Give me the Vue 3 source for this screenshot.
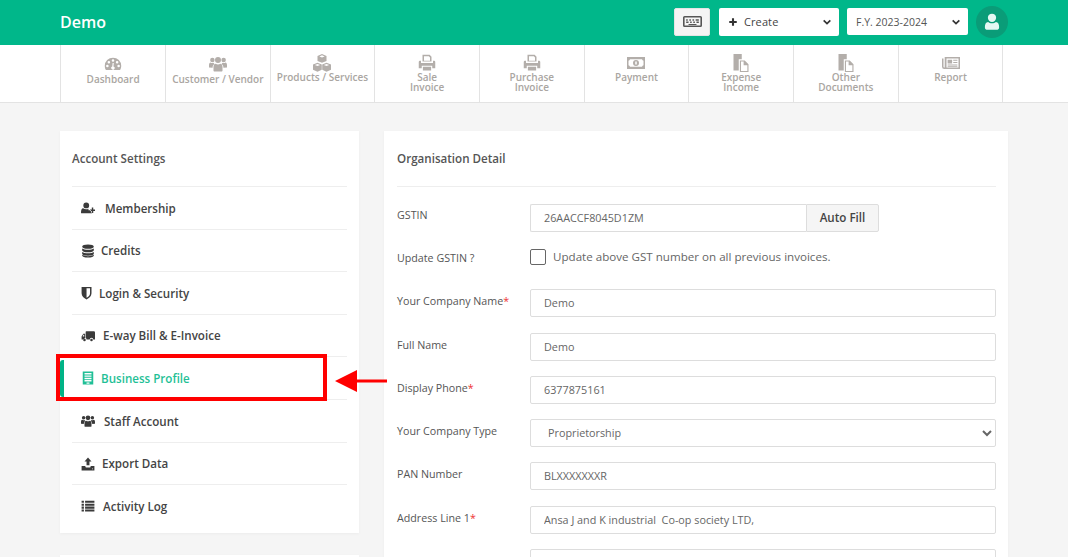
<template>
  <div class="page">
    <header class="topbar">
      <div class="brand">Demo</div>
      <div class="top_actions">
        <button class="key_btn">
          <svg viewBox="0 0 24 24"><path fill-rule="evenodd" :d="icons.keyboard" /></svg>
        </button>
        <div class="top_select create">
          <svg class="plus" viewBox="0 0 24 24"><path :d="icons.plus" /></svg>
          <span>Create</span>
          <svg class="chev" viewBox="0 0 12 12"><path d="M2 4l4 4 4-4" /></svg>
        </div>
        <div class="top_select year">
          <span>F.Y. 2023-2024</span>
          <svg class="chev" viewBox="0 0 12 12"><path d="M2 4l4 4 4-4" /></svg>
        </div>
        <div class="avatar">
          <svg viewBox="0 0 24 24"><path :d="icons.user" /></svg>
        </div>
      </div>
    </header>

    <nav class="menu">
      <a v-for="item in menu" :key="item.label" class="menu_item" :class="{ low: item.low }">
        <svg viewBox="0 0 24 24"><path fill-rule="evenodd" :d="icons[item.icon]" /></svg>
        <span v-html="item.label"></span>
      </a>
    </nav>

    <main class="content">
      <aside class="side">
        <section class="card side_card">
          <h3>Account Settings</h3>
          <ul>
            <li v-for="item in settings" :key="item.label" :class="{ active: item.active }">
              <svg viewBox="0 0 24 24" :style="{ marginRight: item.gap + 'px' }"><path fill-rule="evenodd" :d="icons[item.icon]" /></svg>
              <span>{{ item.label }}</span>
              <template v-if="item.active">
                <div class="red_box"></div>
                <svg class="red_arrow" viewBox="0 0 52 24"><path d="M0 12L22 1v9.500h30v3H22V23z" /></svg>
              </template>
            </li>
          </ul>
        </section>
        <section class="card side_next"></section>
      </aside>

      <section class="card detail">
        <h3>Organisation Detail</h3>
        <form @submit.prevent>
          <div class="row">
            <label>GSTIN</label>
            <div class="group">
              <input type="text" value="26AACCF8045D1ZM">
              <button type="button">Auto Fill</button>
            </div>
          </div>
          <div class="row check_row">
            <label>Update GSTIN ?</label>
            <div class="check">
              <input type="checkbox">
              <span>Update above GST number on all previous invoices.</span>
            </div>
          </div>
          <div class="row" v-for="field in fields" :key="field.label">
            <label>{{ field.label }}<b v-if="field.req">*</b></label>
            <select v-if="field.select">
              <option>{{ field.value }}</option>
            </select>
            <input v-else type="text" :value="field.value">
          </div>
        </form>
      </section>
    </main>
  </div>
</template>

<script setup>
const icons = {
  keyboard: 'M2 5h20a2 2 0 0 1 2 2v10a2 2 0 0 1-2 2H2a2 2 0 0 1-2-2V7a2 2 0 0 1 2-2zM2 7v10h20V7zM4 9h2v2H4zM8 9h2v2H8zM12 9h2v2h-2zM16 9h4v2h-4zM4 12h3v2H4zM9 12h2v2H9zM13 12h2v2h-2zM17 12h3v2h-3zM7 15h10v1.500H7z',
  plus: 'M9.500 3h5v6.500H21v5h-6.500V21h-5v-6.500H3v-5h6.500z',
  user: 'M12 1.500a5.500 5.500 0 1 1 0 11 5.500 5.500 0 0 1 0-11zM6 23c-2 0-3.500-1.200-3.500-3.500 0-4 1.200-7 4.300-7 1.300 1.100 3 1.800 5.200 1.800s3.900-.7 5.200-1.800c3.100 0 4.300 3 4.300 7C21.500 21.800 20 23 18 23z',
  gauge: 'M12 3.500A11 11 0 0 0 1 14.500c0 2 .5 3.900 1.500 5.500h19a11 11 0 0 0 1.500-5.500A11 11 0 0 0 12 3.500zM12 5.500a1.700 1.700 0 1 1 0 3.400 1.700 1.700 0 0 1 0-3.400zM6.500 8a1.700 1.700 0 1 1 0 3.400 1.700 1.700 0 0 1 0-3.400zM17.500 8a1.700 1.700 0 1 1 0 3.400 1.700 1.700 0 0 1 0-3.400zM4.500 13a1.700 1.700 0 1 1 0 3.400 1.700 1.700 0 0 1 0-3.400zM19.500 13a1.700 1.700 0 1 1 0 3.400 1.700 1.700 0 0 1 0-3.400zM13 10.500l-.4 4.700a2.200 2.200 0 1 1-1.600.1l.5-4.800z',
  users: 'M12 2.500a4 4 0 1 1 0 8 4 4 0 0 1 0-8zM4.500 3.500a3 3 0 1 1 0 6 3 3 0 0 1 0-6zM19.500 3.500a3 3 0 1 1 0 6 3 3 0 0 1 0-6zM7.500 22c-1 0-1.500-.6-1.500-1.500V16c0-3 1.500-4.500 3-4.500.8.700 1.800 1 3 1s2.200-.3 3-1c1.500 0 3 1.500 3 4.500v4.500c0 .9-.5 1.500-1.500 1.500zM0 16.500v-3c0-2 1-3.500 2-3.500.7.500 1.500.8 2.500.8.600 0 1.100-.1 1.700-.4.300.8.600 1.200 1.100 1.500C5.500 13 4.800 14.500 4.800 17zM24 16.500v-3c0-2-1-3.500-2-3.500-.7.500-1.500.8-2.500.8-.6 0-1.100-.1-1.700-.4-.3.800-.6 1.200-1.100 1.500 1.800 1.100 2.500 2.600 2.500 5.100z',
  cubes: 'M12 0l6 2.500v6.700l-6 2.500-6-2.500V2.500zM12 1.800L8.500 3.200 12 4.600l3.500-1.400zM6 11.500l5.700 2.400v7l-5.700 2.600-6-2.600v-7zM6 13.200l-3.500 1.500L6 16.100l3.500-1.400zM18 11.500l6 2.400v7l-6 2.600-5.700-2.600v-7zM18 13.200l-3.500 1.500 3.500 1.400 3.500-1.400z',
  print: 'M6 1h9.500L18 3.500V10H6zM8 3v6h8V4.500L14.500 3zM1 10.500a1.500 1.500 0 0 1 1.500-1.500H4v3h16V9h1.500a1.500 1.500 0 0 1 1.500 1.500V19h-4v-3.500H5V19H1zM6.500 17h11v5h-11z',
  money: 'M0 4h24v16H0zM4 7a3 3 0 0 1-2 2v6a3 3 0 0 1 2 2h16a3 3 0 0 1 2-2V9a3 3 0 0 1-2-2zM12 8a4 4 0 1 1 0 8 4 4 0 0 1 0-8zM11 10v4h2v-4z',
  files: 'M2 0h11v7H9v15H2zM10.500 8.500H17l5 5V24H10.500zM12 10v12.500h8.500V15h-5v-5z',
  news: 'M3 4h21v16H3a3 3 0 0 1-3-3V6h2v11a1 1 0 0 0 1 1h.6V4zM6 6v12h16V6zM7.500 7.500h6v5h-6zM15 7.500h5.500V9H15zM15 10.500h5.500V12H15zM7.500 14h13v1.200h-13zM7.500 16h13v1h-13z',
  userPlus: 'M9 2.500a5 5 0 1 1 0 10 5 5 0 0 1 0-10zM1 21c-.6 0-1-.4-1-1 0-4 1-7.500 3.800-7.500 1.300 1.100 3 1.800 5.200 1.800 1.500 0 2.800-.3 3.800-.9v2.600h4.200v3.700h2V21zM18.500 11h2.500v3.500h3V17h-3v3.500h-2.500V17h-3v-2.500h3z',
  database: 'M12 1c6 0 10 1.600 10 3.500S18 8 12 8 2 6.400 2 4.500 6 1 12 1zM2 7.500C4 9 8 9.800 12 9.800s8-.8 10-2.300v3C22 12.400 18 14 12 14S2 12.400 2 10.500zM2 13.500c2 1.500 6 2.300 10 2.300s8-.8 10-2.300v3c0 1.900-4 3.500-10 3.500S2 18.400 2 16.500zM2 18.500c2 1.500 6 2.300 10 2.300s8-.8 10-2.300v1C22 21.400 18 23 12 23S2 21.400 2 19.500z',
  shield: 'M1 1.500h17v11c0 5-4 8.500-8.500 10.500C5 21 1 17.500 1 12.500zM9.500 4v16.300c3.300-1.700 6-4.500 6-7.800V4z',
  truck: 'M9 4h13a2 2 0 0 1 2 2v12h-3a3 3 0 0 0-6 0H9.500A3 3 0 0 0 8 15.500V5a1 1 0 0 1 1-1zM7 8v8a3 3 0 0 0-2.500 2H1v-5l3-5zM5.500 10H4.200L2.800 13h2.700zM6 16.500a2.200 2.200 0 1 1 0 4.400 2.200 2.200 0 0 1 0-4.400zM18 16.500a2.200 2.200 0 1 1 0 4.400 2.200 2.200 0 0 1 0-4.400z',
  building: 'M3 1h18v22H3zM6 3.500v2.500h12V3.500zM6 7.500V10h12V7.500zM6 11.500V14h12v-2.500zM6 15.500V18h12v-2.500zM9.500 19.500V22h5v-2.500z',
  upload: 'M12 1l6 6.500h-3.500V14h-5V7.500H6zM1 15.500h6.500v1c0 .8.700 1.500 1.500 1.500h6c.8 0 1.500-.7 1.500-1.500v-1H23V23H1zM19 19.500v1.500h1.500v-1.500z',
  list: 'M1 3h4v3.500H1zM7 3h16v3.500H7zM1 8h4v3.500H1zM7 8h16v3.500H7zM1 13h4v3.500H1zM7 13h16v3.500H7zM1 18h4v3.500H1zM7 18h16v3.500H7z',
}

const menu = [
  { label: 'Dashboard', icon: 'gauge', low: true },
  { label: 'Customer / Vendor', icon: 'users', low: true },
  { label: 'Products / Services', icon: 'cubes' },
  { label: 'Sale<br>Invoice', icon: 'print' },
  { label: 'Purchase<br>Invoice', icon: 'print' },
  { label: 'Payment', icon: 'money' },
  { label: 'Expense<br>Income', icon: 'files' },
  { label: 'Other<br>Documents', icon: 'files' },
  { label: 'Report', icon: 'news' },
]

const settings = [
  { label: 'Membership', icon: 'userPlus', gap: 10 },
  { label: 'Credits', icon: 'database', gap: 6 },
  { label: 'Login & Security', icon: 'shield', gap: 4 },
  { label: 'E-way Bill & E-Invoice', icon: 'truck', gap: 8 },
  { label: 'Business Profile', icon: 'building', gap: 6, active: true },
  { label: 'Staff Account', icon: 'users', gap: 9 },
  { label: 'Export Data', icon: 'upload', gap: 7 },
  { label: 'Activity Log', icon: 'list', gap: 8 },
]

const fields = [
  { label: 'Your Company Name', value: 'Demo', req: true },
  { label: 'Full Name', value: 'Demo' },
  { label: 'Display Phone', value: '6377875161', req: true },
  { label: 'Your Company Type', value: 'Proprietorship', select: true },
  { label: 'PAN Number', value: 'BLXXXXXXXR' },
  { label: 'Address Line 1', value: 'Ansa J and K industrial  Co-op society LTD,', req: true },
  { label: 'Address Line 2', value: '' },
]
</script>

<style>
html, body {
  overflow: hidden;
}
</style>

<style scoped>
* {
  box-sizing: border-box;
  font-family: 'Open Sans', sans-serif;
}
.page {
  height: 100vh;
  overflow: hidden;
  background: #f5f5f5;
}

/* TOP BAR */
.topbar {
  height: 45px;
  padding: 0 60px 2px;
  background: #00b78a;
  display: flex;
  justify-content: space-between;
  align-items: center;
}
.brand {
  color: #fff;
  font-size: 16px;
  font-weight: 600;
}
.top_actions {
  display: flex;
  align-items: center;
}
.key_btn {
  width: 36px;
  height: 28px;
  margin-right: 8px;
  padding: 0;
  border: 1px solid #e4e4e4;
  border-radius: 2px;
  background: #f4f4f4;
  display: flex;
  justify-content: center;
  align-items: center;
}
.key_btn svg {
  width: 19px;
  height: 19px;
  fill: #555;
}
.top_select {
  width: 121px;
  height: 28px;
  margin-right: 8px;
  padding: 0 7px 0 9px;
  border-radius: 2px;
  background: #fff;
  color: #555;
  font-size: 10.5px;
  display: flex;
  align-items: center;
}
.top_select.create {
  width: 120px;
  margin-left: 1px;
  color: #444;
  font-size: 11px;
  letter-spacing: .1px;
}
.top_select.year {
  height: 27px;
}
.plus {
  width: 10px;
  height: 10px;
  margin-right: 6px;
  fill: #333;
}
.chev {
  width: 10px;
  height: 10px;
  margin-left: auto;
  fill: none;
  stroke: #333;
  stroke-width: 2;
}
.avatar {
  width: 32px;
  height: 32px;
  border-radius: 50%;
  background: #0a9c78;
  display: flex;
  justify-content: center;
  align-items: center;
}
.avatar svg {
  width: 18px;
  height: 19px;
  fill: #e4f8f3;
}

/* MENU */
.menu {
  height: 58px;
  padding: 0 64.7px 0 60.3px;
  background: #fff;
  border-bottom: 1px solid #e3e3e3;
  display: flex;
}
.menu_item {
  flex: 1;
  padding-top: 9px;
  border-left: 1px solid #e3e3e3;
  color: #aaa6a2;
  font-size: 10px;
  font-weight: 600;
  line-height: 10px;
  text-align: center;
  display: flex;
  flex-direction: column;
  align-items: center;
}
.menu_item:last-child {
  border-right: 1px solid #e3e3e3;
}
.menu_item svg {
  width: 18px;
  height: 18px;
  margin-bottom: 0;
  fill: #b3aeaa;
}
.menu_item.low {
  padding-top: 10px;
}
.menu_item.low svg {
  margin-bottom: 1px;
}

/* CONTENT */
.content {
  padding: 28px 60px 0;
  display: flex;
  align-items: flex-start;
  gap: 25px;
}
.card {
  background: #fff;
  box-shadow: 0 1px 3px rgba(0, 0, 0, .04);
}
.card h3 {
  height: 55px;
  margin: 0;
  color: #555;
  font-size: 11.6px;
  font-weight: 600;
  line-height: 55px;
}
.side {
  width: 299px;
  flex: none;
}
.side_card {
  padding: 0 12px 6px;
}
.side_card ul {
  margin: 0;
  padding: 0;
  list-style: none;
}
.side_card li {
  position: relative;
  height: 42.6px;
  padding: .5px 0 0 9px;
  border-top: 1px solid #eee;
  color: #444;
  font-size: 11.6px;
  font-weight: 600;
  display: flex;
  align-items: center;
}
.side_card li svg {
  width: 14px;
  height: 14px;
  flex: none;
  fill: #3a3a3a;
}
.side_card li.active {
  z-index: 1;
  color: #1fbf96;
}
.side_card li.active::before {
  content: '';
  position: absolute;
  left: -12px;
  top: 3px;
  bottom: 2px;
  width: 4px;
  background: #00b386;
  border-radius: 3px 0 0 3px;
}
.side_card li.active svg {
  fill: #1fbf96;
}
.red_box {
  position: absolute;
  left: -16px;
  top: -3px;
  width: 271px;
  height: 47px;
  border: 4px solid #f00;
}
.side_card li.active .red_arrow {
  position: absolute;
  left: 263px;
  top: 12px;
  width: 52px;
  height: 24px;
  fill: #f00;
}
.side_next {
  height: 60px;
  margin-top: 22px;
}
.detail {
  width: 624px;
  flex: none;
  padding: 0 12px 0 13px;
}
.detail h3 {
  border-bottom: 1px solid #eee;
  height: 56px;
}
form {
  padding-top: 17px;
}
.row {
  height: 43.3px;
  display: flex;
  align-items: flex-start;
}
.row label {
  width: 133px;
  flex: none;
  padding-top: 5px;
  color: #555;
  font-size: 10.7px;
}
.row:first-child label {
  padding-top: 4px;
}
.row label b {
  color: #e33;
  font-weight: 400;
}
.row input[type='text'], .row select {
  width: 466px;
  height: 28px;
  padding: 0 13px 1px;
  border: 1px solid #ddd;
  border-radius: 2px;
  outline: none;
  background: #fff;
  color: #666;
  font-size: 10.8px;
}
.group {
  display: flex;
}
.group input[type='text'] {
  width: 276px;
  padding-bottom: 2px;
  border-radius: 2px 0 0 2px;
  border-right: none;
}
.group button {
  width: 73px;
  height: 28px;
  padding-bottom: 2px;
  border: 1px solid #ddd;
  border-radius: 0 2px 2px 0;
  background: #f5f5f5;
  color: #444;
  font-size: 11.6px;
  font-weight: 600;
}
.check_row {
  height: 42px;
}
.check_row label {
  padding-top: 4px;
}
.check {
  padding-top: 2px;
  display: flex;
  align-items: center;
  color: #666;
  font-size: 11.6px;
  line-height: 16px;
}
.check input {
  appearance: none;
  width: 16px;
  height: 16px;
  margin: 0 7px 0 0;
  border: 1px solid #666;
  border-radius: 2px;
  background: #fff;
}
</style>
